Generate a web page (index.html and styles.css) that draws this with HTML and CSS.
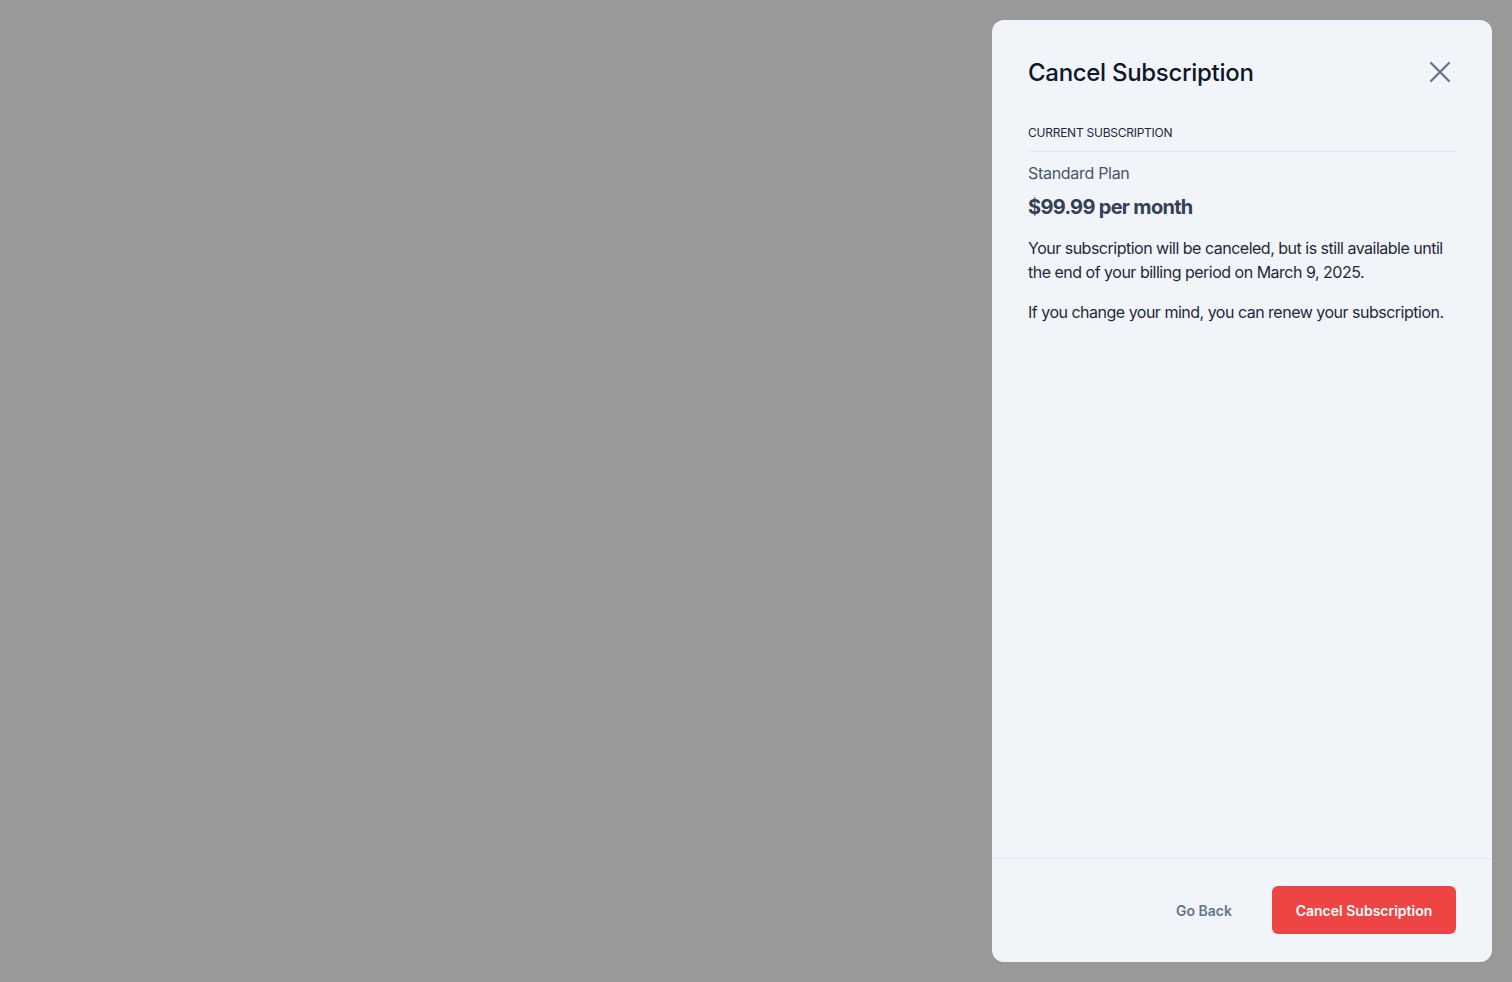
FILE: index.html
```html
<!DOCTYPE html>
<html lang="en">
<head>
<meta charset="utf-8">
<title>Cancel Subscription</title>
<link rel="stylesheet" href="styles.css">
</head>
<body>
<div class="overlay">
  <div class="panel">
    <div class="panel-body">
      <div class="header">
        <h2 class="title">Cancel Subscription</h2>
        <button class="close" aria-label="Close">
          <svg width="24" height="24" viewBox="0 0 24 24" fill="none" stroke="#64748b" stroke-width="2.3" stroke-linecap="round"><path d="M3 3 L21 21 M21 3 L3 21"/></svg>
        </button>
      </div>
      <div class="label">CURRENT SUBSCRIPTION</div>
      <div class="plan">Standard Plan</div>
      <div class="price">$99.99 per month</div>
      <p class="text">Your subscription will be canceled, but is still available until the end of your billing period on March 9, 2025.</p>
      <p class="text">If you change your mind, you can renew your subscription.</p>
    </div>
    <div class="footer">
      <button class="btn-back">Go Back</button>
      <button class="btn-cancel">Cancel Subscription</button>
    </div>
  </div>
</div>
</body>
</html>
```
FILE: styles.css
```css
* { box-sizing: border-box; }
html, body { margin: 0; padding: 0; }
body {
  background: #999999;
  font-family: Inter, "Noto Sans", sans-serif;
  width: 1512px;
  height: 982px;
  overflow: hidden;
}
.overlay {
  display: flex;
  justify-content: flex-end;
  padding: 20px;
  height: 982px;
}
.panel {
  width: 500px;
  height: 942px;
  background: #f1f5f9;
  border-radius: 12px;
  display: flex;
  flex-direction: column;
}
.panel-body {
  flex: 1;
  padding: 37px 36px 0 36px;
}
.header {
  display: flex;
  align-items: center;
  justify-content: space-between;
  height: 32px;
}
.title {
  margin: 0;
  font-size: 24px;
  line-height: 32px;
  font-weight: 500;
  color: #0f172a;
  letter-spacing: -0.3px;
}
.close {
  border: 0;
  background: none;
  padding: 0;
  width: 24px;
  height: 24px;
  margin-right: 4px;
  margin-top: -2px;
  display: flex;
  align-items: center;
  justify-content: center;
  cursor: pointer;
}
.label {
  margin-top: 36px;
  font-size: 12px;
  line-height: 16px;
  color: #1e293b;
  padding-bottom: 10px;
  border-bottom: 1px solid #e2e8f0;
  letter-spacing: -0.25px;
}
.plan {
  margin-top: 9px;
  font-size: 16px;
  line-height: 24px;
  color: #475569;
  letter-spacing: -0.3px;
}
.price {
  margin-top: 8px;
  font-size: 20px;
  line-height: 28px;
  font-weight: 700;
  color: #334155;
  letter-spacing: -0.7px;
}
.text {
  margin: 15px 0 0 0;
  font-size: 16px;
  line-height: 24px;
  color: #1e293b;
  letter-spacing: -0.5px;
}
.text + .text { margin-top: 16px; }
.footer {
  border-top: 1px solid #e2e8f0;
  padding: 27px 36px 28px 36px;
  display: flex;
  justify-content: flex-end;
  align-items: center;
  gap: 16px;
}
.btn-back {
  border: 0;
  background: none;
  height: 48px;
  padding: 0 24px;
  font-family: inherit;
  font-size: 14px;
  font-weight: 600;
  color: #64748b;
  cursor: pointer;
}
.btn-cancel {
  border: 0;
  background: #ef4444;
  color: #ffffff;
  height: 48px;
  width: 184px;
  border-radius: 6px;
  font-family: inherit;
  font-size: 14px;
  font-weight: 600;
  cursor: pointer;
}
```
